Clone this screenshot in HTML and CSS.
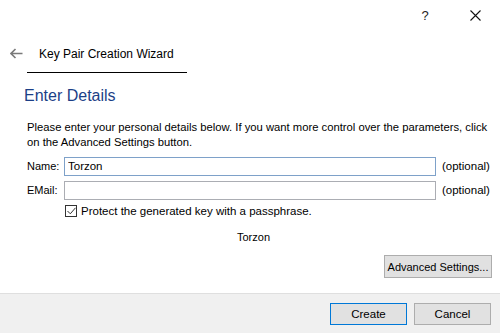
FILE: index.html
```html
<!DOCTYPE html>
<html lang="en">
<head>
    <meta charset="UTF-8">
    <title>Key Pair Creation Wizard</title>
    <link rel="stylesheet" href="styles.css">
</head>
<body>
    <div class="window">
        <div class="titlebar">
            <span class="title-btn help">?</span>
            <span class="title-btn close">
                <svg width="11" height="11" viewBox="0 0 11 11">
                    <path d="M0.5 0.5L10.5 10.5M10.5 0.5L0.5 10.5" stroke="#111" stroke-width="1.1" fill="none" />
                </svg>
            </span>
        </div>

        <div class="wizard-header">
            <span class="back">
                <svg width="13" height="11" viewBox="0 0 13 11">
                    <path d="M1 5.5H12.5M5.5 1L1 5.5L5.5 10" stroke="#7a7a7a" stroke-width="1.6" fill="none" />
                </svg>
            </span>
            <span class="wizard-title">Key Pair Creation Wizard</span>
        </div>

        <main class="page">
            <h1 class="page-title">Enter Details</h1>
            <p class="intro">Please enter your personal details below. If you want more control over the parameters, click on the Advanced Settings button.</p>

            <div class="field-row">
                <label class="field-label">Name:</label>
                <input class="field-input focused" type="text" value="Torzon">
                <span class="field-hint">(optional)</span>
            </div>
            <div class="field-row">
                <label class="field-label">EMail:</label>
                <input class="field-input" type="text" value="">
                <span class="field-hint">(optional)</span>
            </div>

            <div class="check-row">
                <span class="checkbox">
                    <svg width="9" height="8" viewBox="0 0 9 8">
                        <path d="M0.5 4L3.3 6.8L8.5 0.8" stroke="#333" stroke-width="1" fill="none" />
                    </svg>
                </span>
                <span>Protect the generated key with a passphrase.</span>
            </div>

            <div class="result">Torzon</div>

            <div class="advanced-row">
                <button class="btn btn-advanced">Advanced Settings...</button>
            </div>
        </main>

        <footer class="footer">
            <button class="btn btn-wide default">Create</button>
            <button class="btn btn-wide">Cancel</button>
        </footer>
    </div>
</body>
</html>
```

FILE: styles.css
```css
body {
    margin: 0;
    padding: 0;
    background: white;
    font-family: "Liberation Sans", Arial, sans-serif;
    color: #000;
}

.window {
    width: 500px;
    height: 333px;
    display: flex;
    flex-direction: column;
    overflow: hidden;
}

.titlebar {
    height: 33px;
    display: flex;
    justify-content: flex-end;
    align-items: flex-start;
    padding-right: 2px;
    gap: 4px;
}

.title-btn {
    display: flex;
    align-items: center;
    justify-content: center;
    width: 46px;
    height: 30px;
}

.help {
    font-size: 13px;
    color: #222;
}

.wizard-header {
    display: flex;
    align-items: flex-end;
    height: 40px;
    padding-left: 10px;
}

.back {
    display: flex;
    width: 17px;
    align-self: center;
}

.wizard-title {
    padding: 0 13px 10px 12px;
    border-bottom: 1px solid #000;
    font-size: 12px;
    line-height: 16px;
    width: 135px;
    white-space: nowrap;
}

.page {
    flex: 1;
    padding: 0 10px 0 27px;
}

.page-title {
    margin: 14px 0 0 -3px;
    font-size: 16px;
    font-weight: normal;
    color: #1c3f87;
}

.intro {
    margin: 15px 0 5px;
    font-size: 11.25px;
    line-height: 15px;
}

.field-row {
    display: flex;
    align-items: center;
    height: 22px;
    margin-top: 2px;
    font-size: 11px;
}

.field-label {
    width: 37px;
}

.field-input {
    width: 372px;
    height: 19px;
    box-sizing: border-box;
    border: 1px solid #abadb3;
    padding: 0 3px;
    font-family: inherit;
    font-size: 11.5px;
    margin: 0;
    outline: none;
}

.field-input.focused {
    border-color: #7ea1c9;
}

.field-hint {
    margin-left: 6px;
    font-size: 11.5px;
}

.check-row {
    display: flex;
    align-items: center;
    margin: 2px 0 0 38px;
    font-size: 11.5px;
    height: 16px;
}

.checkbox {
    width: 12px;
    height: 12px;
    box-sizing: border-box;
    border: 1px solid #333;
    display: flex;
    align-items: center;
    justify-content: center;
    margin-right: 4px;
}

.result {
    text-align: center;
    font-size: 11px;
    margin-top: 12px;
    padding-right: 10px;
}

.advanced-row {
    display: flex;
    justify-content: flex-end;
    margin: 12px -2px 0 0;
}

.btn {
    font-family: inherit;
    font-size: 11.5px;
    background: #e1e1e1;
    border: 1px solid #adadad;
    color: #000;
    height: 23px;
    padding: 0 5px;
    margin: 0;
}

.btn-advanced {
    width: 108px;
    padding: 0;
    font-size: 11px;
}

.footer {
    height: 40px;
    box-sizing: border-box;
    background: #f0f0f0;
    border-top: 1px solid #dfdfdf;
    display: flex;
    justify-content: flex-end;
    align-items: center;
    gap: 7px;
    padding: 0 9px 0 0;
}

.btn-wide {
    width: 77px;
    height: 22px;
}

.btn.default {
    border-color: #0078d7;
}
```
